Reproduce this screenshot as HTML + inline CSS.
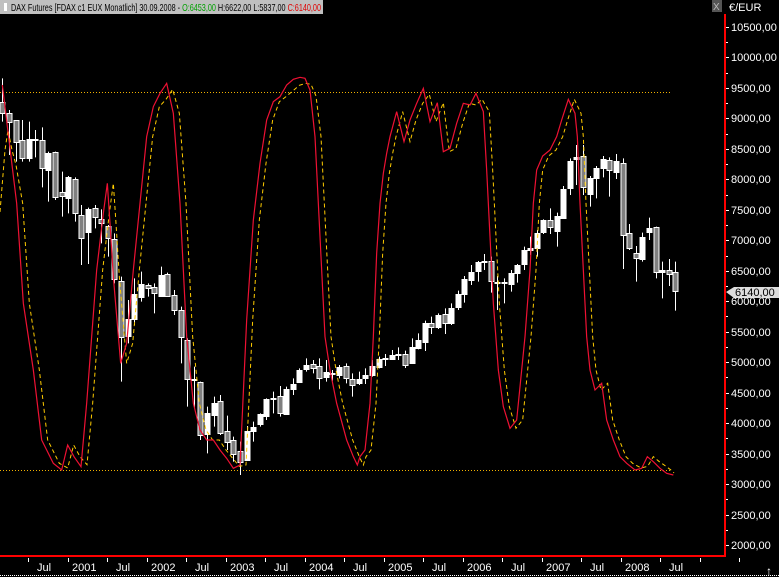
<!DOCTYPE html>
<html><head><meta charset="utf-8"><style>
html,body{margin:0;padding:0;background:#000;width:779px;height:577px;overflow:hidden}
svg{display:block}
text{font-family:"Liberation Sans",sans-serif;font-size:11px;fill:#fff}
</style></head><body>
<svg id="s" width="779" height="577" viewBox="0 0 779 577" xmlns="http://www.w3.org/2000/svg">
<rect width="779" height="577" fill="#000"/>
<rect x="0" y="0" width="323" height="14" fill="#c0c0c0"/>
<rect x="4" y="3" width="3" height="8" fill="#fff"/>
<text x="11" y="11" textLength="310" lengthAdjust="spacingAndGlyphs" style="fill:#000;font-size:10.5px">DAX Futures [FDAX c1 EUX  Monatlich] 30.09.2008 - <tspan style="fill:#00a000">O:6453,00</tspan> H:6622,00 L:5837,00 <tspan style="fill:#e00000">C:6140,00</tspan></text>
<rect x="712" y="0" width="10" height="12" fill="#555"/>
<text x="713" y="10" style="fill:#bbb;font-size:10px">X</text>
<text x="729" y="11">€/EUR</text>
<line x1="725" y1="14" x2="725" y2="557" stroke="#f00" stroke-width="2"/>
<line x1="0" y1="556" x2="726" y2="556" stroke="#f00" stroke-width="2"/>
<line x1="0" y1="575.5" x2="779" y2="575.5" stroke="#fff" stroke-dasharray="1,1"/>
<text x="766" y="575" style="font-size:12px">↑</text>
<line x1="0" y1="92.5" x2="672" y2="92.5" stroke="#f0b000" stroke-dasharray="1,2"/>
<line x1="0" y1="470.5" x2="672" y2="470.5" stroke="#f0b000" stroke-dasharray="1,2"/>
<g id="ax"></g>
<g id="ch"></g>
<polygon points="726,292 734,287 779,287 779,298 734,298" fill="#ddd"/>
<text x="735" y="296" style="fill:#000">6140,00</text>
<g>
<text x="37" y="571">Jul</text><text x="72" y="571">2001</text>
<text x="116" y="571">Jul</text><text x="151" y="571">2002</text>
<text x="195" y="571">Jul</text><text x="230" y="571">2003</text>
<text x="274" y="571">Jul</text><text x="309" y="571">2004</text>
<text x="353" y="571">Jul</text><text x="388" y="571">2005</text>
<text x="432" y="571">Jul</text><text x="467" y="571">2006</text>
<text x="511" y="571">Jul</text><text x="546" y="571">2007</text>
<text x="590" y="571">Jul</text><text x="625" y="571">2008</text>
<text x="669" y="571">Jul</text>
</g>
<g id="lbl">
<text x="731" y="31">10500,00</text><text x="731" y="61">10000,00</text>
<text x="731" y="92">9500,00</text><text x="731" y="122">9000,00</text>
<text x="731" y="153">8500,00</text><text x="731" y="183">8000,00</text>
<text x="731" y="214">7500,00</text><text x="731" y="244">7000,00</text>
<text x="731" y="275">6500,00</text><text x="731" y="305">6000,00</text>
<text x="731" y="336">5500,00</text><text x="731" y="366">5000,00</text>
<text x="731" y="397">4500,00</text><text x="731" y="427">4000,00</text>
<text x="731" y="458">3500,00</text><text x="731" y="488">3000,00</text>
<text x="731" y="519">2500,00</text><text x="731" y="549">2000,00</text>
</g>
</svg>
<script>
var NS="http://www.w3.org/2000/svg";
function el(t,a,p){var e=document.createElementNS(NS,t);for(var k in a)e.setAttribute(k,a[k]);p.appendChild(e);return e;}
var ax=document.getElementById('ax');
for(var i=0;i<=34;i++){var y=Math.round(27+i*15.235)+0.5;el('line',{x1:726,x2:i%2?728:729,y1:y,y2:y,stroke:'#fff'},ax);}
for(var m=0;m<=18;m++){var x=Math.round(28+m*39.5)+0.5;el('line',{x1:x,x2:x,y1:558,y2:562,stroke:'#fff'},ax);}
var C=[[97,130,0],[130,158,0],[150,215,0],[210,265,0],[207,263,1],[207,208,1],[210,295,0],[250,302,1],[247,383,0],[367,380,0],[320,383,1],[327,430,0],[435,503,0],[417,485,1],[415,442,0],[448,460,0],[468,503,0],[507,628,0],[633,800,0],[747,797,1],[672,748,1],[642,680,1],[645,655,0],[651,668,0],[615,677,1],[612,677,0],[675,720,0],[720,800,0],[810,928,0],[928,929,1],[937,1097,0],[1030,1093,1],[998,1035,1],[993,1088,0],[1083,1115,0],[1110,1152,0],[1143,1175,0],[1082,1168,1],[1072,1085,1],[1032,1063,1],[987,1037,1],[985,986,1],[978,1030,0],[957,1032,1],[942,958,1],[900,935,1],[885,898,1],[882,895,0],[888,925,0],[906,922,1],[910,911,1],[890,915,1],[888,925,0],[927,946,0],[927,940,1],
[915,925,1],[888,915,1],[868,892,1],[863,867,1],[855,868,1],[852,853,1],[852,884,0],[832,880,1],[810,833,1],[760,817,1],[760,772,0],[735,770,1],[733,760,0],[715,760,1],[672,710,1],[627,673,1],[606,630,1],[576,604,1],[573,574,1],[574,635,0],[635,636,1],[637,638,1],[608,640,1],[585,610,1],[540,583,1],[535,542,1],[488,533,1],[450,487,1],[450,472,0],[438,482,1],[357,443,1],[272,352,1],[262,268,1],[258,352,0],[325,373,1],[295,325,1],[268,295,1],[270,300,0],[273,307,1],[280,495,0],[490,535,0],[550,565,0],[502,568,1],[475,487,1],[472,607,0],[600,607,1],[600,613,0],[607,663,0]];
var W={0:[25,155],1:[120,255],2:[150,275],3:[150,275],4:[155,275],5:[180,262],6:[172,352],7:[245,395],8:[245,390],9:[305,440],10:[318,430],11:[322,455],12:[405,585],13:[413,582],14:[405,475],15:[418,520],16:[465,560],17:[490,640],18:[620,935],19:[690,820],20:[625,765],21:[605,695],22:[640,680],23:[640,730],24:[590,678],25:[608,680],26:[660,735],27:[710,880],28:[805,1010],29:[890,1015],30:[935,1110],31:[1010,1150],32:[980,1070],33:[975,1095],34:[1037,1140],35:[1100,1175],36:[1115,1215],37:[1068,1170],38:[1055,1115],39:[1030,1070],40:[985,1050],41:[965,1030],42:[948,1040],43:[950,1035],44:[925,975],45:[895,938],46:[865,905],47:[870,910],48:[865,958],49:[870,935],50:[900,932],51:[885,925],52:[880,940],53:[910,980],54:[905,945],
55:[895,942],56:[870,920],57:[860,895],58:[852,888],59:[840,870],60:[832,870],61:[842,894],62:[805,880],63:[790,838],64:[752,843],65:[740,792],66:[730,777],67:[715,792],68:[700,765],69:[662,720],70:[618,698],71:[585,645],72:[573,635],73:[552,600],74:[560,668],75:[618,720],76:[625,700],77:[600,665],78:[582,638],79:[530,600],80:[500,555],81:[480,560],82:[448,492],83:[415,492],84:[428,530],85:[348,447],86:[265,375],87:[225,345],88:[225,375],89:[318,410],90:[288,385],91:[258,322],92:[262,380],93:[252,327],94:[265,597],95:[462,540],96:[528,635],97:[488,575],98:[443,510],99:[470,625],100:[575,685],101:[567,648],102:[575,722]};
var ch=document.getElementById('ch');
for(var i=0;i<C.length;i++){
 var x=Math.round(2.3+i*6.6)+0.5, c=C[i], w=W[i]||[c[0]-12,c[1]+12];
 var t=70+c[0]/3,b=70+c[1]/3;
 el('line',{x1:x,x2:x,y1:70+w[0]/3,y2:70+w[1]/3,stroke:'#fff'},ch);
 var h=Math.max(1,b-t);
 el('rect',{x:x-2.5,y:Math.round(t)+0.5,width:5,height:Math.round(h),fill:c[2]?'#fff':'#808080',stroke:'#fff'},ch);
}
var R=[[7,45],[50,400],[70,700],[100,900],[125,1110],[160,1180],[185,1200],[203,1125],[222,1160],[243,1190],[260,1000],[275,800],[290,600],[310,430],[322,340],[330,460],[340,620],[362,880],[380,820],[400,600],[420,400],[440,200],[460,110],[480,70],[500,40],[520,130],[540,400],[560,800],[580,1000],[600,1080],[620,1110],[640,1110],[660,1140],[680,1165],[700,1195],[720,1185],[740,750],[760,450],[780,280],[800,150],[820,95],[840,80],[860,45],[880,28],[900,22],[915,25],[930,60],[945,200],[960,500],[975,800],[990,900],[1010,1000],[1040,1110],[1060,1160],[1072,1185]];
var R2=[[0,1160],[15,1140],[30,1000],[40,800],[50,550],[60,400],[70,310],[80,250],[90,200],[110,125],[132,215],[150,150],[170,100],[190,55],[210,155],[232,98],[250,245],[270,235],[290,160],[310,100],[330,105],[348,70],[370,125],[380,300],[390,500],[400,700],[415,900],[430,1010],[450,1075],[470,1050],[480,950],[495,800],[510,600],[520,400],[530,300],[548,258],[570,240],[590,200],[605,150],[625,88],[645,130],[652,200],[660,400],[670,600],[680,800],[690,900],[705,960],[725,940],[740,1050],[760,1110],[780,1160],[800,1180],[825,1200],[845,1195],[862,1160],[880,1175],[900,1195],[920,1210],[940,1215]];
var pts=[];R.forEach(function(p){pts.push([p[0]/3,70+p[1]/3]);});R2.forEach(function(p){pts.push([360+p[0]/3,70+p[1]/3]);});
var ys=[[0,212],[5,150],[8,130],[12,150],[16,165]];
var yp=ys.slice();pts.forEach(function(p){if(p[0]>12){var q=p[1];yp.push([Math.min(p[0]+6,674),q<95?q+6:(q>465?q-2:q)]);}});
el('polyline',{points:yp.map(function(p){return p.join(',')}).join(' '),fill:'none',stroke:'#ffcc00','stroke-width':1,'stroke-dasharray':'4,3'},ch);
el('polyline',{points:pts.map(function(p){return p.join(',')}).join(' '),fill:'none',stroke:'#ee1133','stroke-width':1.2},ch);
</script>
</body></html>
